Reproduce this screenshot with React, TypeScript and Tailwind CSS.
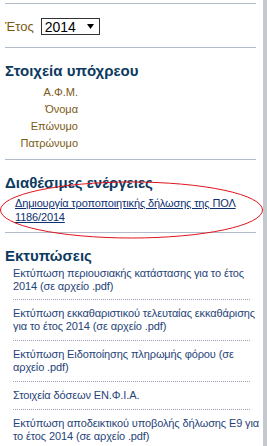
import React from "react";

const items: string[] = [
  "Εκτύπωση περιουσιακής κατάστασης για το έτος 2014 (σε αρχείο .pdf)",
  "Εκτύπωση εκκαθαριστικού τελευταίας εκκαθάρισης για το έτος 2014 (σε αρχείο .pdf)",
  "Εκτύπωση Ειδοποίησης πληρωμής φόρου (σε αρχείο .pdf)",
  "Στοιχεία δόσεων ΕΝ.Φ.Ι.Α.",
  "Εκτύπωση αποδεικτικού υποβολής δήλωσης Ε9 για το έτος 2014 (σε αρχείο .pdf)",
];

export default function App() {
  return (
    <div className="relative flex w-[267px] h-[446px] overflow-hidden bg-white font-['Liberation_Sans',Arial,sans-serif]">
      <div className="w-[263px] pl-[5px] pr-[7px]">
        <div className="h-[3px]" />
        <div className="h-px bg-[#b3bccb]" />
        <div className="flex items-center h-[43px] pt-[2px]">
          <span className="text-[13px] text-[#7b5a14] mr-[7px]">Έτος</span>
          <div className="flex items-center w-[59px] h-[17px] border border-[#333] pl-[3px] pr-[4px] justify-between">
            <span className="text-[14px] leading-none text-black">2014</span>
            <svg width="8" height="5" viewBox="0 0 8 5">
              <path d="M0 0 L7 0 L3.5 5 Z" fill="#000" />
            </svg>
          </div>
        </div>
        <div className="h-px bg-[#b3bccb]" />

        <h2 className="mt-[14px] text-[15px] leading-[18px] font-bold text-[#0d3a5f]">Στοιχεία υπόχρεου</h2>
        <div className="mt-[4px] w-[73px] text-right text-[11px] leading-[17px] text-[#7b5a14]">
          <div>Α.Φ.Μ.</div>
          <div>Όνομα</div>
          <div>Επώνυμο</div>
          <div>Πατρώνυμο</div>
        </div>
        <div className="mt-[7px] h-px bg-[#b3bccb]" />

        <h2 className="mt-[14px] text-[15px] leading-[18px] font-bold text-[#0d3a5f]">Διαθέσιμες ενέργειες</h2>
        <div className="mt-[4px] pl-[10px] text-[11px] leading-[14px] tracking-[-0.15px]">
          <a href="#" className="underline text-[#0c3070]">
            Δημιουργία τροποποιητικής δήλωσης της ΠΟΛ 1186/2014
          </a>
        </div>
        <div className="mt-[8px] h-px bg-[#b3bccb]" />

        <h2 className="mt-[14px] text-[15px] leading-[18px] font-bold text-[#0d3a5f]">Εκτυπώσεις</h2>
        <div className="pl-[8px] -mr-[4px] mt-[2px] text-[11px] leading-[13px] tracking-[-0.12px] text-[#1f4478]">
          {items.map((t, i) => (
            <div key={i}>
              <div className={i === 0 ? "pb-[6px]" : "py-[7px]"}>{t}</div>
              {i < items.length - 1 && (
                <div className="mr-[10px] border-b border-dotted border-[#9aa3b5]" />
              )}
            </div>
          ))}
        </div>
      </div>
      <div className="w-[4px] h-full bg-[#c5c8cc]" />
      <svg className="absolute left-0 top-0 pointer-events-none" width="267" height="446">
        <ellipse cx="131.5" cy="210" rx="131" ry="28" fill="none" stroke="#e0141e" strokeWidth="1" />
      </svg>
    </div>
  );
}
